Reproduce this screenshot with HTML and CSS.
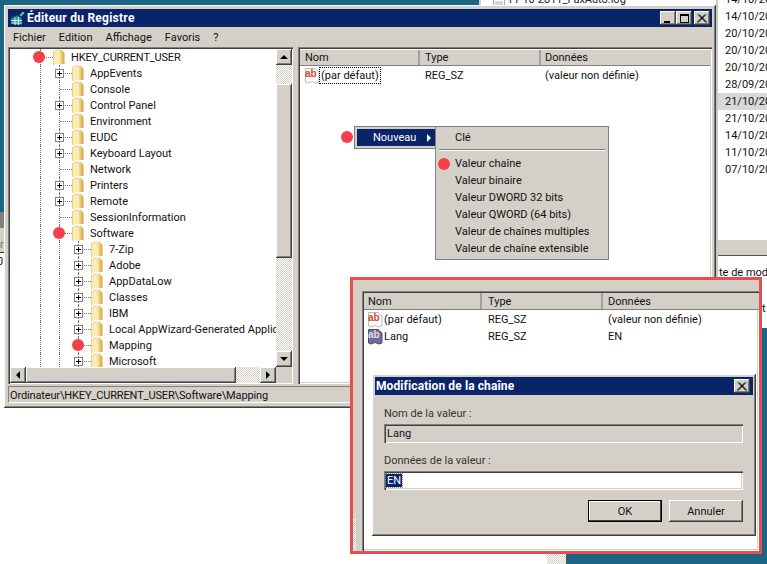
FILE: index.html
```html
<!DOCTYPE html>
<html lang="fr">

<head>
	<meta charset="UTF-8">
	<title>Éditeur du Registre</title>
	<link rel="stylesheet" href="styles.css">
</head>

<body>
	<svg class="defs" width="0" height="0">
		<defs>
			<linearGradient id="fold" x1="0" y1="0" x2="1" y2="0">
				<stop offset="0" stop-color="#fbeeb8"/>
				<stop offset="0.5" stop-color="#f0d585"/>
				<stop offset="1" stop-color="#cfa243"/>
			</linearGradient>
			<symbol id="folder" viewBox="0 0 13 16">
				<path d="M1 2 L7 0 L7 14 L1 16 Z" fill="#e9cf83"/>
				<path d="M5 1 L10 1 L12.5 4 L12.5 15 L5 15 Z" fill="url(#fold)"/>
				<path d="M2 2 L6 2 L8 4 L8 15 L2 15 Z" fill="#faecb4"/>
			</symbol>
			<symbol id="plus" viewBox="0 0 9 9">
				<rect x="0.5" y="0.5" width="8" height="8" fill="#fff" stroke="#808080"/>
				<path d="M2 4.5 H7 M4.5 2 V7" stroke="#000" fill="none"/>
			</symbol>
			<symbol id="page" viewBox="0 0 16 16">
				<path d="M1.5 0.5 H11 L15 4 V14 L12 15 L8 13.5 L4 15 L1.5 14 Z" fill="#fff" stroke="#b8b8c4"/>
			</symbol>
			<symbol id="page-sel" viewBox="0 0 16 16">
				<path d="M1.5 0.5 H11 L15 4 V14 L12 15 L8 13.5 L4 15 L1.5 14 Z" fill="#6d6d9a" stroke="#4c4c78"/>
			</symbol>
		</defs>
	</svg>

	<div class="screen">
		<div class="desk-top"></div>
		<div class="desk-left">
			<div class="left-dark"></div>
			<div class="left-light">r</div>
			<div class="left-white">0</div>
		</div>
		<div class="desk-low"></div>
		<div class="desk-dither dither"></div>

		<div class="file-strip">
			<svg class="file-icon" width="12" height="16" viewBox="0 0 12 16">
				<path d="M0.5 0.5 H11.5 V15.5 H0.5 Z M2 9 H10 M2 11 H10 M2 13 H10" fill="#fff" stroke="#a8a8b8"/>
			</svg>
			<span>11-10-2011_FaxAuto.log</span>
		</div>

		<div class="dates">
			<div class="date">14/10/2011</div>
			<div class="date">14/10/2011</div>
			<div class="date">20/10/2011</div>
			<div class="date">20/10/2011</div>
			<div class="date">20/10/2011</div>
			<div class="date">28/09/2011</div>
			<div class="date picked">21/10/2011</div>
			<div class="date">21/10/2011</div>
			<div class="date">14/10/2011</div>
			<div class="date">11/10/2011</div>
			<div class="date">07/10/2011</div>
			<div class="dates-gap"></div>
			<div class="dates-head"></div>
			<div class="dates-text">te de modif</div>
			<div class="dates-text second">t</div>
		</div>

		<div class="window">
			<div class="titlebar">
				<svg class="app-icon" width="16" height="16" viewBox="0 0 16 16">
					<path d="M1 8 L7 5 L12 8 L12 15 L5 15 L1 13 Z" fill="#2f8f9d" stroke="#123c50"/>
					<path d="M1 10.5 L12 10.5 M1 13 L12 13 M5 8 L5 15 M8.5 7 L8.5 15" stroke="#c8eef0" fill="none"/>
					<path d="M9 5 L13 1 L15 3 L11 7 Z" fill="#5fb7b0" stroke="#123c50"/>
					<path d="M7 4 L8 1 M12 6 L15 7" stroke="#123c50" fill="none"/>
				</svg>
				<span class="title-text">Éditeur du Registre</span>
				<div class="win-btns">
					<div class="bevel win-btn"><i class="min-mark"></i></div>
					<div class="bevel win-btn"><i class="max-mark"></i></div>
					<div class="bevel win-btn close-gap">
						<svg width="10" height="9" viewBox="0 0 10 9"><path d="M1 0.5 L9 8.5 M9 0.5 L1 8.5 M2 0.5 L10 8.5 M8 0.5 L0 8.5" stroke="#000" fill="none"/></svg>
					</div>
				</div>
			</div>

			<div class="menubar">
				<span>Fichier</span>
				<span>Edition</span>
				<span>Affichage</span>
				<span>Favoris</span>
				<span>?</span>
			</div>

			<div class="panes">
				<div class="tree-pane sunken">
					<div class="tree-top">
						<div class="tree">
							<div class="row"><i class="twist"></i><svg class="folder"><use href="#folder"/></svg><span class="caps">HKEY_CURRENT_USER</span></div>
							<div class="row"><i class="guide"></i><i class="twist"><svg class="plus"><use href="#plus"/></svg></i><svg class="folder"><use href="#folder"/></svg><span>AppEvents</span></div>
							<div class="row"><i class="guide"></i><i class="twist"></i><svg class="folder"><use href="#folder"/></svg><span>Console</span></div>
							<div class="row"><i class="guide"></i><i class="twist"><svg class="plus"><use href="#plus"/></svg></i><svg class="folder"><use href="#folder"/></svg><span>Control Panel</span></div>
							<div class="row"><i class="guide"></i><i class="twist"></i><svg class="folder"><use href="#folder"/></svg><span>Environment</span></div>
							<div class="row"><i class="guide"></i><i class="twist"><svg class="plus"><use href="#plus"/></svg></i><svg class="folder"><use href="#folder"/></svg><span>EUDC</span></div>
							<div class="row"><i class="guide"></i><i class="twist"><svg class="plus"><use href="#plus"/></svg></i><svg class="folder"><use href="#folder"/></svg><span>Keyboard Layout</span></div>
							<div class="row"><i class="guide"></i><i class="twist"></i><svg class="folder"><use href="#folder"/></svg><span>Network</span></div>
							<div class="row"><i class="guide"></i><i class="twist"><svg class="plus"><use href="#plus"/></svg></i><svg class="folder"><use href="#folder"/></svg><span>Printers</span></div>
							<div class="row"><i class="guide"></i><i class="twist"><svg class="plus"><use href="#plus"/></svg></i><svg class="folder"><use href="#folder"/></svg><span>Remote</span></div>
							<div class="row"><i class="guide"></i><i class="twist"></i><svg class="folder"><use href="#folder"/></svg><span>SessionInformation</span></div>
							<div class="row"><i class="guide"></i><i class="twist"></i><svg class="folder"><use href="#folder"/></svg><span>Software</span></div>
							<div class="row"><i class="guide"></i><i class="guide"></i><i class="twist"><svg class="plus"><use href="#plus"/></svg></i><svg class="folder"><use href="#folder"/></svg><span>7-Zip</span></div>
							<div class="row"><i class="guide"></i><i class="guide"></i><i class="twist"><svg class="plus"><use href="#plus"/></svg></i><svg class="folder"><use href="#folder"/></svg><span>Adobe</span></div>
							<div class="row"><i class="guide"></i><i class="guide"></i><i class="twist"><svg class="plus"><use href="#plus"/></svg></i><svg class="folder"><use href="#folder"/></svg><span>AppDataLow</span></div>
							<div class="row"><i class="guide"></i><i class="guide"></i><i class="twist"><svg class="plus"><use href="#plus"/></svg></i><svg class="folder"><use href="#folder"/></svg><span>Classes</span></div>
							<div class="row"><i class="guide"></i><i class="guide"></i><i class="twist"><svg class="plus"><use href="#plus"/></svg></i><svg class="folder"><use href="#folder"/></svg><span>IBM</span></div>
							<div class="row"><i class="guide"></i><i class="guide"></i><i class="twist"><svg class="plus"><use href="#plus"/></svg></i><svg class="folder"><use href="#folder"/></svg><span>Local AppWizard-Generated Application</span></div>
							<div class="row"><i class="guide"></i><i class="guide"></i><i class="twist"></i><svg class="folder"><use href="#folder"/></svg><span>Mapping</span></div>
							<div class="row"><i class="guide"></i><i class="guide"></i><i class="twist"><svg class="plus"><use href="#plus"/></svg></i><svg class="folder"><use href="#folder"/></svg><span>Microsoft</span></div>
						</div>
						<div class="vscroll">
							<div class="bevel arrow-btn"><i class="arrow up"></i></div>
							<div class="dither track-a"></div>
							<div class="bevel thumb-v"></div>
							<div class="dither grow"></div>
							<div class="bevel arrow-btn"><i class="arrow down"></i></div>
						</div>
					</div>
					<div class="hscroll">
						<div class="bevel arrow-btn"><i class="arrow left"></i></div>
						<div class="bevel thumb-h"></div>
						<div class="dither grow"></div>
						<div class="bevel arrow-btn"><i class="arrow right"></i></div>
						<div class="corner"></div>
					</div>
				</div>

				<div class="list-pane sunken">
					<div class="list-head">
						<div class="col-name bevel-head">Nom</div>
						<div class="col-type bevel-head">Type</div>
						<div class="col-data bevel-head">Données</div>
					</div>
					<div class="list-row">
						<div class="col-name cell">
							<svg class="ab-icon" viewBox="0 0 16 16"><use href="#page"/><text x="1" y="9" class="ab-red">ab</text></svg>
							<span class="focus-name">(par défaut)</span>
						</div>
						<div class="col-type cell">REG_SZ</div>
						<div class="col-data cell">(valeur non définie)</div>
					</div>
				</div>
			</div>

			<div class="statusbar">
				<div class="status-text">Ordinateur\HKEY_CURRENT_USER\Software\Mapping</div>
			</div>
		</div>

		<div class="menu-first">
			<div class="menu-hot">
				<span>Nouveau</span>
				<i class="arrow right white"></i>
			</div>
		</div>
		<div class="menu-sub">
			<div class="menu-item">Clé</div>
			<div class="menu-sep"></div>
			<div class="menu-item">Valeur chaîne</div>
			<div class="menu-item">Valeur binaire</div>
			<div class="menu-item">Valeur DWORD 32 bits</div>
			<div class="menu-item">Valeur QWORD (64 bits)</div>
			<div class="menu-item">Valeur de chaînes multiples</div>
			<div class="menu-item">Valeur de chaîne extensible</div>
		</div>

		<div class="callout">
			<div class="callout-side">
				<div class="grow"></div>
				<div class="dither side-dither"></div>
			</div>
			<div class="callout-main">
				<div class="list-pane sunken callout-list">
					<div class="list-head">
						<div class="col-name bevel-head">Nom</div>
						<div class="col-type bevel-head">Type</div>
						<div class="col-data bevel-head">Données</div>
					</div>
					<div class="list-row">
						<div class="col-name cell">
							<svg class="ab-icon" viewBox="0 0 16 16"><use href="#page"/><text x="1" y="9" class="ab-red">ab</text></svg>
							<span class="plain-name">(par défaut)</span>
						</div>
						<div class="col-type cell">REG_SZ</div>
						<div class="col-data cell">(valeur non définie)</div>
					</div>
					<div class="list-row">
						<div class="col-name cell">
							<svg class="ab-icon" viewBox="0 0 16 16"><use href="#page-sel"/><text x="1" y="9" class="ab-pale">ab</text></svg>
							<span class="plain-name">Lang</span>
						</div>
						<div class="col-type cell">REG_SZ</div>
						<div class="col-data cell">EN</div>
					</div>
				</div>
			</div>
		</div>

		<div class="dialog">
			<div class="dialog-title">
				<span>Modification de la chaîne</span>
				<div class="bevel win-btn">
					<svg width="10" height="9" viewBox="0 0 10 9"><path d="M1 0.5 L9 8.5 M9 0.5 L1 8.5 M2 0.5 L10 8.5 M8 0.5 L0 8.5" stroke="#000" fill="none"/></svg>
				</div>
			</div>
			<div class="dialog-body">
				<div class="field-label">Nom de la valeur :</div>
				<div class="field sunken field-off">Lang</div>
				<div class="field-label data-label">Données de la valeur :</div>
				<div class="field sunken"><span class="picked-text">EN</span></div>
				<div class="dialog-btns">
					<div class="btn btn-default">OK</div>
					<div class="btn bevel">Annuler</div>
				</div>
			</div>
		</div>

		<i class="dot dot-root"></i>
		<i class="dot dot-soft"></i>
		<i class="dot dot-map"></i>
		<i class="dot dot-new"></i>
		<i class="dot dot-chain"></i>
	</div>
</body>

</html>
```

FILE: styles.css
```css
* {
	box-sizing: border-box;
}

body {
	margin: 0;
	background: #fff;
	font-family: Roboto, "Liberation Sans", Arial, sans-serif;
	font-size: 11px;
	color: #111;
}

.defs {
	position: absolute;
}

.screen {
	position: relative;
	width: 767px;
	height: 564px;
	overflow: hidden;
	background: #fff;
}

.grow {
	flex: 1;
}

/* shared win2k look */
.bevel {
	background: #d4d0c8;
	box-shadow: inset -1px -1px #404040, inset 1px 1px #fff, inset -2px -2px #808080, inset 2px 2px #d4d0c8;
}

.sunken {
	box-shadow: inset 1px 1px #808080, inset 2px 2px #404040, inset -1px -1px #fff, inset -2px -2px #d4d0c8;
}

.dither {
	background: repeating-conic-gradient(#d4d0c8 0 25%, #fff 0 50%) 0 0 / 2px 2px;
}

/* what is behind the window */
.desk-top {
	position: absolute;
	left: 0;
	top: 0;
	width: 480px;
	height: 12px;
	background: #1b6484;
}

.desk-left {
	position: absolute;
	left: 0;
	top: 0;
	width: 6px;
	height: 564px;
	background: #1b6484;
	padding-top: 212px;
	display: flex;
	flex-direction: column;
}

.left-dark {
	height: 16px;
	background: #808080;
}

.left-light {
	height: 25px;
	background: #d4d0c8;
	color: #777;
	line-height: 34px;
	border-bottom: 1px solid #333;
}

.left-white {
	flex: 1;
	background: #fff;
	line-height: 18px;
	text-indent: -3px;
}

.desk-low {
	position: absolute;
	left: 566px;
	top: 320px;
	width: 201px;
	height: 244px;
	background: #1b6484;
	border-left: 1px solid #555;
}

.desk-dither {
	position: absolute;
	left: 547px;
	top: 540px;
	width: 19px;
	height: 24px;
}

.file-strip {
	position: absolute;
	left: 479px;
	top: -7px;
	width: 288px;
	height: 30px;
	background: #fff;
	border-left: 2px solid #d4d0c8;
	display: flex;
	align-items: flex-start;
	gap: 2px;
	padding-left: 12px;
	font-size: 11px;
	line-height: 14px;
	color: #222;
}

.dates {
	position: absolute;
	left: 716px;
	top: -9px;
	width: 51px;
	height: 337px;
	background: #fff;
	border-left: 2px solid #c8c8c8;
	overflow: hidden;
	white-space: nowrap;
}

.date {
	height: 17px;
	line-height: 17px;
	padding-left: 7px;
}

.date.picked {
	background: #d8d8d8;
}

.dates-gap {
	height: 62px;
}

.dates-head {
	height: 16px;
	background: #d4d0c8;
	border-bottom: 1px solid #555;
}

.dates-text {
	margin-top: 10px;
	height: 14px;
	line-height: 14px;
	padding-left: 1px;
}

.dates-text.second {
	margin-top: 22px;
	padding-left: 44px;
}

/* main window */
.window {
	position: absolute;
	left: 4px;
	top: 5px;
	width: 712px;
	height: 403px;
	background: #d4d0c8;
	padding: 4px;
	box-shadow: inset -1px -1px #404040, inset 1px 1px #fff, inset -2px -2px #808080, inset 2px 2px #d4d0c8;
	display: flex;
	flex-direction: column;
}

.titlebar {
	height: 18px;
	background: #0a246a;
	color: #fff;
	display: flex;
	align-items: center;
	padding: 0 2px;
	flex: none;
}

.app-icon {
	flex: none;
	margin-right: 1px;
}

.title-text {
	font-weight: bold;
	font-size: 12px;
	letter-spacing: 0.25px;
}

.win-btns {
	margin-left: auto;
	display: flex;
}

.win-btn {
	width: 16px;
	height: 14px;
	display: flex;
	align-items: center;
	justify-content: center;
	flex: none;
}

.close-gap {
	margin-left: 2px;
}

.min-mark {
	width: 6px;
	height: 2px;
	background: #000;
	margin-top: 7px;
	margin-right: 3px;
}

.max-mark {
	width: 9px;
	height: 9px;
	border: 1px solid #000;
	border-top-width: 2px;
}

.menubar {
	height: 20px;
	display: flex;
	align-items: center;
	padding-left: 5px;
	gap: 13px;
	flex: none;
}

.panes {
	display: flex;
	gap: 5px;
	height: 337px;
	flex: none;
}

.tree-pane {
	width: 285px;
	padding: 2px 1px 1px 2px;
	background: #fff;
	display: flex;
	flex-direction: column;
}

.tree-top {
	display: flex;
	height: 318px;
}

.tree {
	flex: 1;
	min-width: 0;
	overflow: hidden;
	padding-left: 30px;
	white-space: nowrap;
}

.row {
	display: flex;
	height: 16px;
	align-items: center;
}

.caps {
	letter-spacing: -0.18px;
}

.guide {
	width: 19px;
	height: 16px;
	flex: none;
	border-left: 1px dotted #777;
}

.twist {
	position: relative;
	width: 12px;
	height: 16px;
	flex: none;
	border-left: 1px dotted #777;
}

.twist::after {
	content: "";
	position: absolute;
	left: 0;
	top: 8px;
	width: 12px;
	border-top: 1px dotted #777;
}

.plus {
	position: absolute;
	left: -5px;
	top: 4px;
	width: 9px;
	height: 9px;
	z-index: 1;
}

.folder {
	width: 13px;
	height: 16px;
	flex: none;
	margin-right: 6px;
}

.vscroll {
	width: 16px;
	flex: none;
	display: flex;
	flex-direction: column;
}

.arrow-btn {
	width: 16px;
	height: 16px;
	flex: none;
	display: flex;
	align-items: center;
	justify-content: center;
}

.track-a {
	height: 19px;
}

.thumb-v {
	height: 174px;
}

.hscroll {
	height: 16px;
	display: flex;
	flex: none;
}

.thumb-h {
	width: 210px;
}

.corner {
	width: 16px;
	flex: none;
	background: #d4d0c8;
}

.arrow {
	width: 0;
	height: 0;
	border-style: solid;
	border-color: transparent;
}

.arrow.up {
	border-width: 0 4px 4px;
	border-bottom-color: #000;
}

.arrow.down {
	border-width: 4px 4px 0;
	border-top-color: #000;
}

.arrow.left {
	border-width: 4px 4px 4px 0;
	border-right-color: #000;
}

.arrow.right {
	border-width: 4px 0 4px 4px;
	border-left-color: #000;
}

.arrow.right.white {
	border-left-color: #fff;
}

.list-pane {
	flex: 1;
	background: #fff;
	padding: 3px 2px 0;
}

.list-head {
	display: flex;
	height: 16px;
	margin-bottom: 1px;
	background: #d4d0c8;
	border-bottom: 1px solid #808080;
}

.bevel-head {
	line-height: 16px;
	border-right: 2px solid #a0a0a0;
}

.list-row {
	display: flex;
	height: 17px;
	align-items: center;
}

.col-name {
	width: 120px;
	padding-left: 5px;
	flex: none;
}

.col-type {
	width: 121px;
	padding-left: 5px;
	flex: none;
}

.col-data {
	flex: 1;
	padding-left: 4px;
}

.bevel-head.col-data {
	border-right: 0;
}

.cell {
	display: flex;
	align-items: center;
	white-space: nowrap;
	height: 17px;
}

.cell.col-name {
	padding-left: 4px;
}

.ab-icon {
	width: 16px;
	height: 16px;
	flex: none;
}

.ab-red,
.ab-pale {
	font-family: "Liberation Sans", Arial, sans-serif;
	font-weight: bold;
	font-size: 10px;
}

.ab-red {
	fill: #d6482c;
}

.ab-pale {
	fill: #e8d8e0;
}

.focus-name {
	border: 1px dotted #000;
	height: 17px;
	line-height: 15px;
	padding: 0 1px;
	margin-left: -1px;
}

.plain-name {
	margin-left: 1px;
}

.statusbar {
	flex: 1;
	padding-top: 2px;
}

.status-text {
	height: 17px;
	line-height: 18px;
	padding-left: 1px;
	letter-spacing: -0.14px;
	border-top: 1px solid #808080;
	border-left: 1px solid #808080;
	border-bottom: 1px solid #fff;
	border-right: 1px solid #fff;
}

/* context menu */
.menu-first {
	position: absolute;
	left: 354px;
	top: 126px;
	width: 82px;
	height: 23px;
	background: #d4d0c8;
	border: 1px solid #808080;
	padding: 2px 0 2px 2px;
}

.menu-hot {
	height: 17px;
	background: #0a246a;
	color: #fff;
	display: flex;
	align-items: center;
	padding-left: 16px;
	gap: 11px;
}

.menu-sub {
	position: absolute;
	left: 435px;
	top: 126px;
	width: 174px;
	height: 134px;
	background: #d4d0c8;
	border: 1px solid #808080;
	padding-top: 2px;
}

.menu-item {
	height: 17px;
	line-height: 17px;
	padding-left: 19px;
}

.menu-sep {
	margin: 3px 3px 4px;
	height: 2px;
	border-top: 1px solid #808080;
	border-bottom: 1px solid #fff;
}

/* red frame with the second shot */
.callout {
	position: absolute;
	left: 350px;
	top: 277px;
	width: 412px;
	height: 277px;
	border: 3px solid #e5504f;
	background: #d4d0c8;
	display: flex;
	overflow: hidden;
}

.callout-side {
	width: 9px;
	flex: none;
	display: flex;
	flex-direction: column;
}

.side-dither {
	width: 3px;
	height: 32px;
}

.callout-main {
	flex: 1;
	min-width: 0;
	padding-top: 11px;
	display: flex;
}

.callout-list {
	padding: 2px 0 0 2px;
}

.callout-list .list-head {
	height: 17px;
}

.callout-list .bevel-head {
	line-height: 18px;
}

.callout-list .col-name {
	width: 118px;
	padding-left: 4px;
}

.callout-list .cell.col-name {
	padding-left: 3px;
}

.callout-list .col-type {
	padding-left: 6px;
}

.callout-list .col-data {
	padding-left: 5px;
}

/* string edit dialog */
.dialog {
	position: absolute;
	left: 372px;
	top: 374px;
	width: 384px;
	height: 162px;
	background: #d4d0c8;
	padding: 3px;
	box-shadow: inset -1px -1px #404040, inset 1px 1px #fff, inset -2px -2px #808080, inset 2px 2px #d4d0c8;
}

.dialog-title {
	height: 18px;
	background: #0a246a;
	color: #fff;
	font-weight: bold;
	font-size: 12px;
	letter-spacing: 0.1px;
	display: flex;
	align-items: center;
	justify-content: space-between;
	padding: 0 3px 0 1px;
}

.dialog-body {
	padding: 11px 10px 0 9px;
}

.field-label {
	height: 14px;
	line-height: 16px;
	color: #333;
}

.data-label {
	margin-top: 10px;
}

.field {
	height: 19px;
	line-height: 20px;
	margin-top: 4px;
	padding-left: 3px;
	background: #fff;
}

.field-off {
	background: #d4d0c8;
}

.picked-text {
	background: #0a246a;
	color: #fff;
	padding: 0 1px;
	margin-left: -1px;
	outline: 1px dotted #888;
}

.dialog-btns {
	display: flex;
	justify-content: flex-end;
	gap: 7px;
	margin-top: 10px;
}

.btn {
	width: 74px;
	height: 22px;
	line-height: 24px;
	text-align: center;
}

.btn-default {
	background: #d4d0c8;
	border: 1px solid #000;
	line-height: 22px;
	box-shadow: inset -1px -1px #404040, inset 1px 1px #fff;
}

/* red markers drawn on top of the shot */
.dot {
	position: absolute;
	width: 12px;
	height: 12px;
	border-radius: 50%;
	background: #f5404a;
}

.dot-root {
	left: 33px;
	top: 51px;
}

.dot-soft {
	left: 53px;
	top: 227px;
}

.dot-map {
	left: 72px;
	top: 339px;
}

.dot-new {
	left: 341px;
	top: 131px;
}

.dot-chain {
	left: 438px;
	top: 158px;
}
```
